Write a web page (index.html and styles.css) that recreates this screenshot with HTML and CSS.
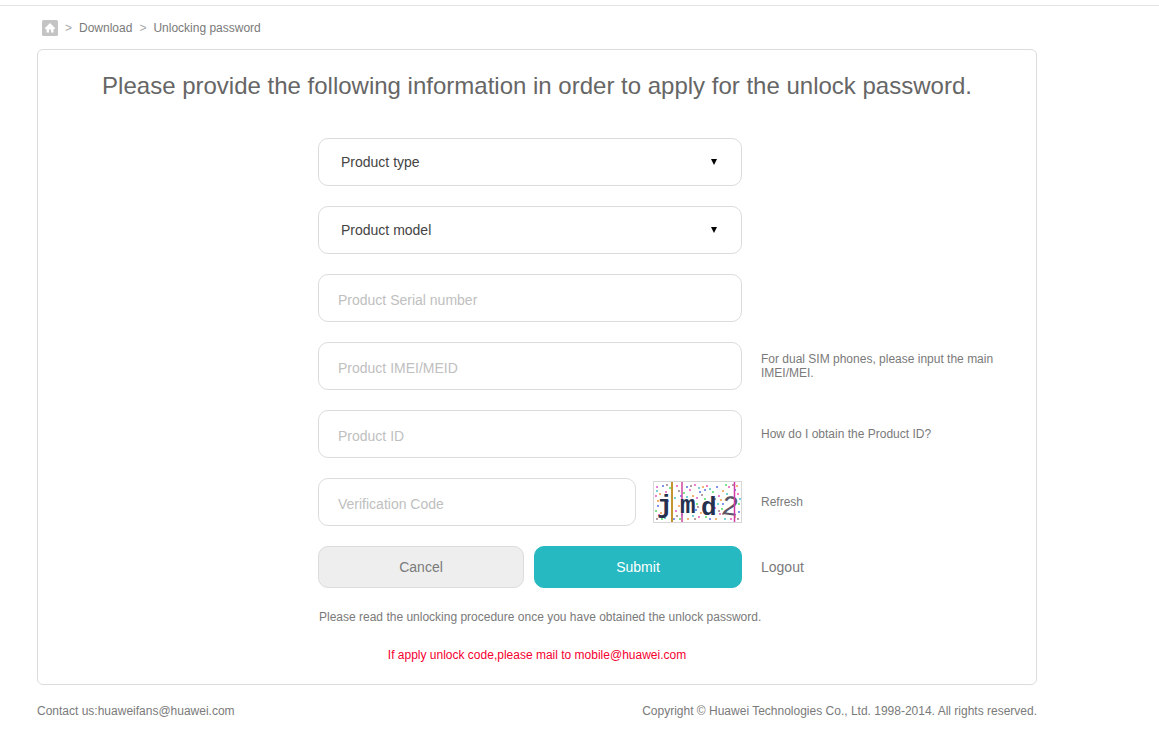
FILE: index.html
```
<!DOCTYPE html>
<html lang="en">
<head>
    <meta charset="UTF-8">
    <meta name="viewport" content="width=device-width, initial-scale=1.0">
    <title>Unlocking password</title>
    <link rel="stylesheet" href="styles.css">
</head>
<body>
    <div class="page">
        <nav class="breadcrumb" aria-label="Breadcrumb">
            <a href="#" class="home-link" aria-label="Home">
                <svg width="16" height="16" viewBox="0 0 16 16">
                    <rect width="16" height="16" rx="1.5" fill="#c4c4c4"/>
                    <path d="M8 3L3 8v1h1.500v3.500H7V9.500h2v3h2.500V9H13V8L8 3z" fill="#fff"/>
                </svg>
            </a>
            <span class="separator">&gt;</span>
            <a href="#">Download</a>
            <span class="separator">&gt;</span>
            <a href="#">Unlocking password</a>
        </nav>

        <main class="card">
            <h1>Please provide the following information in order to apply for the unlock password.</h1>

            <form class="unlock-form">
                <div class="row">
                    <div class="select-field">
                        <select class="field" aria-label="Product type">
                            <option>Product type</option>
                        </select>
                    </div>
                </div>
                <div class="row">
                    <div class="select-field">
                        <select class="field" aria-label="Product model">
                            <option>Product model</option>
                        </select>
                    </div>
                </div>
                <div class="row">
                    <input class="field" type="text" placeholder="Product Serial number" aria-label="Product Serial number">
                </div>
                <div class="row">
                    <input class="field" type="text" placeholder="Product IMEI/MEID" aria-label="Product IMEI/MEID">
                    <p class="hint">For dual SIM phones, please input the main IMEI/MEI.</p>
                </div>
                <div class="row">
                    <input class="field" type="text" placeholder="Product ID" aria-label="Product ID">
                    <a href="#" class="hint">How do I obtain the Product ID?</a>
                </div>
                <div class="row">
                    <div class="verify">
                        <input class="field" type="text" placeholder="Verification Code" aria-label="Verification Code">
                        <svg class="captcha" width="89" height="42" viewBox="0 0 89 42" role="img" aria-label="Verification image">
                            <rect x="0.5" y="0.5" width="88" height="41" fill="#fff" stroke="#d6d6d6"/>
                            <g class="noise">
                                <path stroke="#e33bb5" d="M4 5v2M13 10v2M24 4v2M37 8v2M44 16v2M54 4v2M66 14v2M76 5v2M85 12v2M6 33v2M23 29v2M46 35v2M67 32v2M78 37v2M42 3v2M3 14v2M62 26v2"/>
                                <path stroke="#3d5be0" d="M10 4v2M28 14v2M47 10v2M64 5v2M82 8v2M5 24v2M21 37v2M43 28v2M57 37v2M70 22v2M86 30v2M34 5v2M52 8v2M15 19v2"/>
                                <path stroke="#35d64a" d="M17 6v2M31 11v2M52 17v2M60 10v2M79 16v2M3 29v2M27 37v2M44 22v2M53 35v2M69 27v2M86 22v2M73 3v2M9 37v2"/>
                                <path stroke="#f08a2c" d="M7 12v2M26 24v2M40 14v2M50 5v2M70 9v2M84 4v2M8 31v2M35 37v2M48 31v2M63 37v2M82 35v2M68 18v2M5 19v2"/>
                                <path stroke="#2cb7bd" d="M4 9v2M22 16v2M34 15v2M57 7v2M74 12v2M87 17v2M12 36v2M40 34v2M65 22v2M72 37v2M46 6v2M29 33v2"/>
                                <path stroke="#8a6a72" d="M14 3v2M26 9v2M38 4v2M49 13v2M62 17v2M80 3v2M4 37v2M24 34v2M42 37v2M66 29v2M85 37v2M45 25v2M70 32v2"/>
                            </g>
                            <path d="M19 1v40" stroke="#c4942e" stroke-width="2"/>
                            <path d="M29 1v40" stroke="#cf45a2" stroke-width="1.500"/>
                            <g class="code">
                                <text x="4" y="32">j</text>
                                <text x="27" y="32">m</text>
                                <text x="48" y="34">d</text>
                                <text x="69" y="34" class="light" transform="rotate(8 78 24)">2</text>
                            </g>
                            <path d="M81.500 1v40" stroke="#d03aa4" stroke-width="1.500"/>
                        </svg>
                    </div>
                    <a href="#" class="hint">Refresh</a>
                </div>
                <div class="row">
                    <div class="buttons">
                        <button type="reset" class="btn cancel">Cancel</button>
                        <button type="submit" class="btn submit">Submit</button>
                    </div>
                    <a href="#" class="hint logout">Logout</a>
                </div>
            </form>

            <p class="procedure">Please read the unlocking procedure once you have obtained the unlock password.</p>
            <p class="notice">If apply unlock code,please mail to mobile@huawei.com</p>
        </main>

        <footer>
            <span>Contact us:huaweifans@huawei.com</span>
            <span>Copyright © Huawei Technologies Co., Ltd. 1998-2014. All rights reserved.</span>
        </footer>
    </div>
</body>
</html>
```
FILE: styles.css
```
:root {
    --line: #dcdcdc;
    --text: #7a7a7a;
    --teal: #26b9c1;
}

* {
    box-sizing: border-box;
}

body {
    margin: 5px 0 0;
    border-top: 1px solid #e5e5e5;
    background: white;
    color: var(--text);
    font-family: "Liberation Sans", Arial, sans-serif;
    font-size: 12px;
    line-height: 14px;
}

a {
    color: inherit;
    text-decoration: none;
}

p {
    margin: 0;
}

.page {
    max-width: 1000px;
    margin-left: 37px;
}

.breadcrumb {
    display: flex;
    align-items: center;
    gap: 7px;
    padding: 14px 5px 13px;
}

.home-link svg {
    display: block;
}

.separator {
    color: #a8a8a8;
}

.card {
    border: 1px solid var(--line);
    border-radius: 6px;
    padding: 22px 0;
}

.card h1 {
    margin: 0 0 38px;
    color: #666;
    font-size: 24px;
    font-weight: normal;
    line-height: 28px;
    text-align: center;
}

.unlock-form {
    display: flex;
    flex-direction: column;
    gap: 20px;
    padding-left: 280px;
}

.row {
    display: grid;
    grid-template-columns: minmax(0, 424px) minmax(0, 250px);
    gap: 19px;
    align-items: center;
}

.field {
    width: 100%;
    height: 48px;
    border: 1px solid var(--line);
    border-radius: 10px;
    padding: 4px 19px 0;
    background: white;
    color: #444;
    font-family: inherit;
    font-size: 14px;
}

.field::placeholder {
    color: #c0c0c0;
    opacity: 1;
}

.select-field {
    position: relative;
}

.select-field select {
    display: block;
    appearance: none;
    padding: 0 22px;
}

.select-field::after {
    content: "";
    position: absolute;
    right: 25px;
    top: 21px;
    border: 3px solid transparent;
    border-top: 6px solid black;
    border-bottom: 0;
    pointer-events: none;
}

.verify {
    display: grid;
    grid-template-columns: 1fr 89px;
    gap: 17px;
    align-items: center;
}

.noise path {
    fill: none;
    stroke-width: 2;
    opacity: 0.65;
}

.code {
    fill: #26304f;
    font-family: "Liberation Mono", monospace;
    font-size: 26px;
    font-weight: bold;
}

.code .light {
    fill: #5b5566;
    font-size: 28px;
    font-weight: normal;
}

.buttons {
    display: grid;
    grid-template-columns: 206fr 208fr;
    gap: 10px;
}

.btn {
    height: 42px;
    border: 1px solid var(--line);
    border-radius: 10px;
    font-family: inherit;
    font-size: 14px;
}

.cancel {
    background: #eee;
    color: var(--text);
}

.submit {
    border-color: var(--teal);
    background: var(--teal);
    color: white;
}

.logout {
    font-size: 14px;
}

.procedure {
    margin: 22px 0 24px 281px;
}

.notice {
    color: #f5002f;
    text-align: center;
}

footer {
    display: flex;
    justify-content: space-between;
    margin-top: 19px;
}

@media (max-width: 900px) {
    .page {
        margin: 0 20px;
    }

    .unlock-form {
        padding: 0 20px;
    }

    .procedure {
        margin-left: 20px;
    }
}
```
